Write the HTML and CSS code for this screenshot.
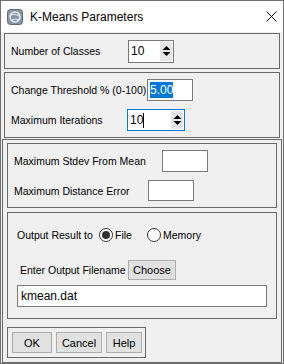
FILE: index.html
```html
<!DOCTYPE html>
<html lang="en">
<head>
    <meta charset="UTF-8">
    <title>K-Means Parameters</title>
    <link rel="stylesheet" href="styles.css">
</head>
<body>

    <div class="window">
        <!-- Title bar -->
        <div class="titlebar">
            <svg class="app-icon" width="16" height="16" viewBox="0 0 16 16">
                <rect x="0.5" y="0.5" width="15" height="15" rx="3" fill="#8796a3" stroke="#5d6b77"/>
                <circle cx="8" cy="8" r="5" fill="none" stroke="#e8edf1" stroke-width="1.6"/>
                <path d="M4 6 Q8 4 12 7 M5 11 Q9 9 12 11" fill="none" stroke="#e8edf1" stroke-width="1"/>
            </svg>
            <span class="title">K-Means Parameters</span>
            <svg class="close" width="11" height="11" viewBox="0 0 11 11">
                <path d="M0.5 0.5 L10.5 10.5 M10.5 0.5 L0.5 10.5" stroke="#000" stroke-width="1"/>
            </svg>
        </div>

        <div class="content">
            <!-- Number of classes -->
            <div class="panel panel-classes">
                <div class="row">
                    <label class="lbl w-classes">Number of Classes</label>
                    <div class="spinner w45">
                        <span class="value">10</span>
                        <span class="spin">
                            <svg width="11" height="14" viewBox="0 0 11 14"><path d="M1.5 6 L5.5 2 L9.5 6 Z M1.5 8 L9.5 8 L5.5 12 Z" fill="#000"/></svg>
                        </span>
                    </div>
                </div>
            </div>

            <!-- Threshold and iterations -->
            <div class="panel panel-threshold">
                <div class="row">
                    <label class="lbl w-threshold">Change Threshold % (0-100)</label>
                    <div class="textbox w46"><span class="selected">5.00</span></div>
                </div>
                <div class="row">
                    <label class="lbl w-iter">Maximum Iterations</label>
                    <div class="spinner focused w58">
                        <span class="value">10<span class="caret"></span></span>
                        <span class="spin">
                            <svg width="11" height="14" viewBox="0 0 11 14"><path d="M1.5 6 L5.5 2 L9.5 6 Z M1.5 8 L9.5 8 L5.5 12 Z" fill="#000"/></svg>
                        </span>
                    </div>
                </div>
            </div>

            <div class="frame">
                <!-- Optional limits -->
                <div class="panel panel-limits">
                    <div class="row">
                        <label class="lbl w-stdev">Maximum Stdev From Mean</label>
                        <div class="textbox w46"></div>
                    </div>
                    <div class="row">
                        <label class="lbl w-dist">Maximum Distance Error</label>
                        <div class="textbox w46 short"></div>
                    </div>
                </div>

                <!-- Output -->
                <div class="panel panel-output">
                    <div class="row radio-row">
                        <label class="lbl w-output">Output Result to</label>
                        <span class="radio checked"></span><span class="radio-text w-file">File</span>
                        <span class="radio"></span><span class="radio-text">Memory</span>
                    </div>
                    <div class="row choose-row">
                        <label class="lbl w-filename">Enter Output Filename</label>
                        <button class="btn choose">Choose</button>
                    </div>
                    <div class="textbox filename">kmean.dat</div>
                </div>

                <!-- Dialog buttons -->
                <div class="panel panel-buttons">
                    <button class="btn ok">OK</button>
                    <button class="btn cancel">Cancel</button>
                    <button class="btn help">Help</button>
                </div>
            </div>
        </div>
    </div>

</body>
</html>
```

FILE: styles.css
```css
body {
    margin: 0;
    font-family: "Liberation Sans", Arial, sans-serif;
    font-size: 10.5px;
    color: #000;
    background: #f0f0f0;
}

.window {
    width: 284px;
    height: 364px;
    box-sizing: border-box;
    border: 1px solid #707070;
    background-color: #f0f0f0;
    display: flex;
    flex-direction: column;
}

.titlebar {
    height: 31px;
    flex: none;
    background-color: #fff;
    display: flex;
    align-items: center;
    padding-left: 6px;
}

.title {
    font-size: 12px;
    margin-left: 7px;
    flex: 1;
    padding-top: 1px;
}

.close {
    margin-right: 6px;
}

.content {
    flex: 1;
    display: flex;
    flex-direction: column;
    padding-top: 1px;
}

.panel {
    box-sizing: border-box;
    border: 1px solid #6a6a6a;
    margin: 0 3px;
}

.row {
    display: flex;
    align-items: center;
}

.lbl {
    flex: none;
    white-space: nowrap;
}

/* label widths put each control where it sits in the dialog */
.w-classes { width: 117px; }
.w-threshold { width: 136px; }
.w-iter { width: 116px; }
.w-stdev { width: 148px; }
.w-dist { width: 134px; }
.w-output { width: 82px; }
.w-file { width: 32px; }
.w-filename { width: 108px; }

.panel-classes {
    height: 36px;
    padding-left: 6px;
    display: flex;
    align-items: center;
}

.panel-threshold {
    height: 66px;
    margin-top: 3px;
    padding: 6px 0 0 6px;
}

.panel-threshold .row + .row {
    margin-top: 8px;
}

.textbox {
    box-sizing: border-box;
    height: 22px;
    border: 1px solid #7a7a7a;
    background-color: #fff;
    display: flex;
    align-items: center;
    padding-left: 2px;
    font-size: 12px;
}

.w46 { width: 46px; }
.w45 { width: 46px; }
.w58 { width: 58px; }

.selected {
    background-color: #0078d7;
    color: #fff;
    padding: 1px 0;
}

.spinner {
    box-sizing: border-box;
    height: 23px;
    border: 1px solid #7a7a7a;
    background-color: #fff;
    display: flex;
    align-items: stretch;
    font-size: 12px;
}

.spinner.focused {
    border-color: #0078d7;
    height: 22px;
}

.spinner .value {
    flex: 1;
    display: flex;
    align-items: center;
    padding-left: 2px;
}

.caret {
    display: inline-block;
    width: 1px;
    height: 15px;
    background-color: #000;
}

.spin {
    width: 12px;
    margin: 1px;
    background-color: #e6e6e6;
    display: flex;
    align-items: center;
    justify-content: center;
}

.frame {
    flex: 1;
    margin: 1px 1px 0 1px;
    border: 1px solid #6a6a6a;
    display: flex;
    flex-direction: column;
}

.frame .panel {
    margin: 0 4px;
}

.frame .panel-limits {
    height: 65px;
    margin-top: 3px;
    padding: 6px 0 0 6px;
}

.panel-limits .row + .row {
    margin-top: 8px;
}

.textbox.short {
    height: 21px;
}

.frame .panel-output {
    height: 107px;
    margin-top: 4px;
    padding: 15px 0 0 9px;
}

.radio {
    box-sizing: border-box;
    width: 14px;
    height: 14px;
    border: 1px solid #333;
    border-radius: 50%;
    background-color: #fff;
    display: flex;
    align-items: center;
    justify-content: center;
    flex: none;
}

.radio.checked::after {
    content: "";
    width: 8px;
    height: 8px;
    border-radius: 50%;
    background-color: #333;
}

.radio-text {
    margin-left: 2px;
}

.choose-row {
    margin-top: 18px;
    padding-left: 3px;
}

.btn {
    box-sizing: border-box;
    font-family: "Liberation Sans", Arial, sans-serif;
    font-size: 11px;
    color: #000;
    background-color: #e1e1e1;
    border: 1px solid #adadad;
    padding: 0;
    height: 20px;
}

.choose {
    width: 48px;
}

.filename {
    width: 250px;
    margin-top: 5px;
    padding-left: 3px;
}

.frame .panel-buttons {
    width: 139px;
    height: 31px;
    margin-top: 8px;
    display: flex;
    align-items: center;
    gap: 4px;
    padding-left: 4px;
}

.ok { width: 40px; height: 21px; }
.cancel { width: 46px; height: 21px; }
.help { width: 36px; height: 21px; }
```
